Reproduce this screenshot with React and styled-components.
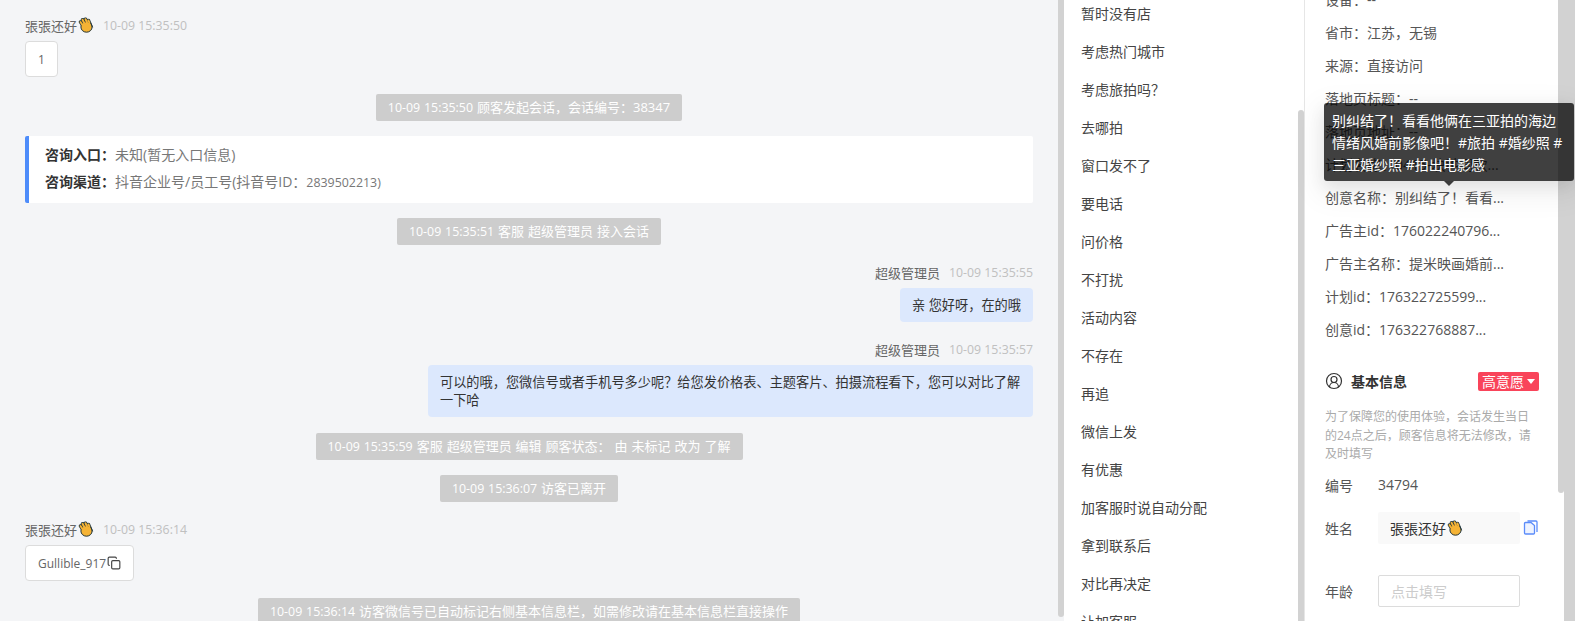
import React from "react";
import styled, { createGlobalStyle } from "styled-components";
import { CircleUserRound, Copy } from "lucide-react";

const GlobalStyle = createGlobalStyle`
  html, body {
    margin: 0;
    height: 100%;
    overflow: hidden;
    background: #d2d2d2;
    font-family: "Open Sans", "Noto Sans CJK SC", sans-serif;
  }
`;

const Page = styled.div`
  position: relative;
  display: flex;
  width: 1575px;
  height: 621px;
  overflow: hidden;
`;

const ChatPanel = styled.div`
  width: 1058px;
  height: 621px;
  flex: none;
  box-sizing: border-box;
  padding: 15px 25px 0;
  background: #f4f5f7;
  overflow: hidden;
  display: flex;
  flex-direction: column;

  > * {
    flex: none;
  }
`;

const ChatScroll = styled.div`
  width: 6px;
  flex: none;
  height: 621px;
  background: #f4f5f7;
`;

const ChatThumb = styled.div`
  height: 617px;
  background: #d2d2d2;
  border-radius: 0 0 3px 3px;
`;

const MetaRow = styled.div`
  display: flex;
  align-items: center;
  justify-content: ${(p) => (p.$right ? "flex-end" : "flex-start")};
  height: 20px;
  margin-top: ${(p) => p.$top || 0}px;
  font-size: 13px;
  color: #666;
`;

const Time = styled.span`
  margin-left: 9px;
  font-size: 12.3px;
  color: #c0c0c0;
`;

const Bubble = styled.div`
  align-self: flex-start;
  box-sizing: border-box;
  height: 36px;
  margin-top: 6px;
  padding: 0 12px;
  display: flex;
  align-items: center;
  background: #fff;
  border: 1px solid #dcdcdc;
  border-radius: 4px;
  font-size: 12px;
  color: #666;

  svg {
    margin-left: 1px;
  }
`;

const Notice = styled.div`
  align-self: center;
  margin-top: ${(p) => p.$top}px;
  padding: 0 12px;
  height: 27px;
  line-height: 27px;
  background: #cdcdcd;
  border-radius: 2px;
  font-size: 13px;
  word-spacing: 0.6px;
  color: #fff;
  white-space: nowrap;
`;

const Stamp = styled.span`
  font-size: 12.4px;
`;

const InfoCard = styled.div`
  margin-top: 15px;
  height: 67px;
  box-sizing: border-box;
  padding: 5px 16px;
  background: #fff;
  border-left: 4px solid #4d8cfa;
  border-radius: 2px;
  font-size: 14px;
  line-height: 27px;
  color: #777;
  white-space: nowrap;

  b {
    color: #333;
    font-weight: 700;
  }
`;

const AgentBubble = styled.div`
  align-self: flex-end;
  box-sizing: border-box;
  max-width: 605px;
  margin-top: 6px;
  padding: 8px 12px;
  background: #dce8fd;
  border-radius: 4px;
  font-size: 13.2px;
  line-height: 18px;
  color: #333;
`;

const QuickList = styled.div`
  width: 234px;
  flex: none;
  height: 621px;
  overflow: hidden;
  background: #fff;
  box-sizing: border-box;
  padding: 0 12px 0 17px;
`;

const QuickItem = styled.div`
  height: 38px;
  line-height: 38px;
  font-size: 14px;
  color: #444;
  &:first-child {
    margin-top: -5px;
  }
`;

const QuickScroll = styled.div`
  width: 6px;
  flex: none;
  height: 621px;
  display: flex;
  flex-direction: column;
  background: #fff;
`;

const QuickThumb = styled.div`
  margin-top: 110px;
  flex: 1;
  background: #d2d2d2;
  border-radius: 3px 3px 0 0;
`;

const Divider = styled.div`
  width: 1px;
  flex: none;
  background: #e6e6e6;
`;

const SidePanel = styled.div`
  width: 253px;
  flex: none;
  height: 621px;
  overflow: hidden;
  background: #fff;
  box-sizing: border-box;
  padding: 0 0 0 20px;
`;

const FactRow = styled.div`
  height: 33px;
  line-height: 33px;
  font-size: 14px;
  color: #555;
  white-space: nowrap;
  &:first-child {
    margin-top: -17px;
  }
`;

const SectionHead = styled.div`
  display: flex;
  align-items: center;
  margin-top: 25px;
  height: 20px;
  padding-right: 19px;
  color: #333;
  font-size: 14px;
  font-weight: 700;

  svg {
    margin-right: 8px;
  }
`;

const IntentTag = styled.span`
  margin-left: auto;
  display: flex;
  align-items: center;
  gap: 3px;
  height: 19px;
  padding: 0 4px;
  background: #f9445a;
  border-radius: 2px;
  color: #fff;
  font-size: 14px;
  font-weight: 400;
`;

const Caret = styled.i`
  width: 0;
  height: 0;
  border: 4px solid transparent;
  border-top: 5px solid #fff;
  border-bottom: 0;
`;

const Hint = styled.p`
  margin: 17px 26px 0 0;
  font-size: 12px;
  line-height: 18.5px;
  color: #aaa;
`;

const FormRow = styled.div`
  display: flex;
  align-items: center;
  margin-top: ${(p) => p.$top}px;
  font-size: 14px;
  color: #555;
`;

const FormLabel = styled.span`
  width: 53px;
  flex: none;
`;

const NameBox = styled.div`
  width: 142px;
  height: 32px;
  box-sizing: border-box;
  padding-left: 12px;
  display: flex;
  align-items: center;
  background: #f9f9f9;
  border-radius: 2px;
  font-size: 14px;
  color: #333;
`;

const Input = styled.div`
  width: 142px;
  height: 32px;
  box-sizing: border-box;
  padding-left: 12px;
  display: flex;
  align-items: center;
  border: 1px solid #dcdcdc;
  border-radius: 2px;
  font-size: 14px;
  color: #ccc;
`;

const RightScroll = styled.div`
  width: 6px;
  flex: none;
  height: 621px;
  background: #fff;
`;

const RightThumb = styled.div`
  height: 493px;
  background: #d2d2d2;
  border-radius: 0 0 3px 3px;
`;

const Tooltip = styled.div`
  position: absolute;
  left: 1324px;
  top: 103px;
  width: 250px;
  box-sizing: border-box;
  padding: 7px 8px 5px;
  background: rgba(0, 0, 0, 0.75);
  border-radius: 3px;
  box-shadow: 0 6px 16px rgba(0, 0, 0, 0.08), 0 9px 28px 8px rgba(0, 0, 0, 0.05);
  font-size: 14px;
  line-height: 22px;
  color: #fff;
  word-break: break-all;

  &::after {
    content: "";
    position: absolute;
    left: 120px;
    bottom: -5px;
    border: 5px solid transparent;
    border-top: 5px solid rgba(0, 0, 0, 0.75);
    border-bottom: 0;
  }
`;

// no colour emoji font in the sandbox, so the clapping hands are drawn
function Wave() {
  const fingers = "M4.5 8 L2.5 5 M6.5 6.5 L4.5 2.8 M9 5.5 L7.5 2.2 M11.5 6 L10.5 3.5";
  return (
    <svg width="16" height="16" viewBox="0 0 16 16" style={{ marginLeft: 1 }}>
      <path d="M3.5 3 L6 0.8 L9.5 1 L7 4Z" fill="#1f4f66" />
      <path d={fingers} stroke="#21363d" strokeWidth="3.4" strokeLinecap="round" fill="none" />
      <ellipse cx="8.5" cy="10" rx="5.6" ry="5.2" fill="#f5b335" stroke="#21363d" strokeWidth="1" />
      <path d={fingers} stroke="#f5b335" strokeWidth="2" strokeLinecap="round" fill="none" />
      <path d="M13 6 L14.5 10" stroke="#21363d" strokeWidth="1" strokeLinecap="round" />
    </svg>
  );
}

function DocsIcon() {
  return (
    <svg width="15" height="15" viewBox="0 0 15 15" style={{ marginLeft: 3 }}>
      <path d="M4.5 1 H13 a1 1 0 0 1 1 1 V12" fill="none" stroke="#5b8cfa" strokeWidth="1.3" />
      <path d="M1.5 3.5 a1 1 0 0 1 1 -1 H8 L11.5 5.5 V13 a1 1 0 0 1 -1 1 H2.5 a1 1 0 0 1 -1 -1Z" fill="#eef3ff" stroke="#5b8cfa" strokeWidth="1.3" />
    </svg>
  );
}

const quickItems = [
  "暂时没有店", "考虑热门城市", "考虑旅拍吗？", "去哪拍", "窗口发不了", "要电话", "问价格", "不打扰",
  "活动内容", "不存在", "再追", "微信上发", "有优惠", "加客服时说自动分配", "拿到联系后", "对比再决定", "让加客服",
];

const facts = [
  "设备：--", "省市：江苏，无锡", "来源：直接访问", "落地页标题：--", "落地页地址：--", "计划名称：0415-块种同款...",
  "创意名称：别纠结了！看看...", "广告主id：176022240796...", "广告主名称：提米映画婚前...", "计划id：176322725599...", "创意id：176322768887...",
];

export default function App() {
  return (
    <Page>
      <GlobalStyle />
      <ChatPanel>
        <MetaRow>張張还好<Wave /><Time>10-09 15:35:50</Time></MetaRow>
        <Bubble>1</Bubble>
        <Notice $top={17}><Stamp>10-09 15:35:50</Stamp> 顾客发起会话，会话编号：38347</Notice>
        <InfoCard>
          <div><b>咨询入口：</b>未知(暂无入口信息)</div>
          <div><b>咨询渠道：</b>抖音企业号/员工号(抖音号ID：<Stamp>2839502213)</Stamp></div>
        </InfoCard>
        <Notice $top={15}><Stamp>10-09 15:35:51</Stamp> 客服 超级管理员 接入会话</Notice>
        <MetaRow $right $top={17}>超级管理员<Time>10-09 15:35:55</Time></MetaRow>
        <AgentBubble>亲 您好呀，在的哦</AgentBubble>
        <MetaRow $right $top={17}>超级管理员<Time>10-09 15:35:57</Time></MetaRow>
        <AgentBubble>可以的哦，您微信号或者手机号多少呢？给您发价格表、主题客片、拍摄流程看下，您可以对比了解一下哈</AgentBubble>
        <Notice $top={16}><Stamp>10-09 15:35:59</Stamp> 客服 超级管理员 编辑 顾客状态： 由 未标记 改为 了解</Notice>
        <Notice $top={15}><Stamp>10-09 15:36:07</Stamp> 访客已离开</Notice>
        <MetaRow $top={17}>張張还好<Wave /><Time>10-09 15:36:14</Time></MetaRow>
        <Bubble>Gullible_917<Copy size={14} color="#444" /></Bubble>
        <Notice $top={17}><Stamp>10-09 15:36:14</Stamp> 访客微信号已自动标记右侧基本信息栏，如需修改请在基本信息栏直接操作</Notice>
      </ChatPanel>
      <ChatScroll><ChatThumb /></ChatScroll>
      <QuickList>
        {quickItems.map((t) => <QuickItem key={t}>{t}</QuickItem>)}
      </QuickList>
      <QuickScroll><QuickThumb /></QuickScroll>
      <Divider />
      <SidePanel>
        {facts.map((t) => <FactRow key={t}>{t}</FactRow>)}
        <SectionHead><CircleUserRound size={18} strokeWidth={1.6} />基本信息<IntentTag>高意愿<Caret /></IntentTag></SectionHead>
        <Hint>为了保障您的使用体验，会话发生当日的24点之后，顾客信息将无法修改，请及时填写</Hint>
        <FormRow $top={11}><FormLabel>编号</FormLabel>34794</FormRow>
        <FormRow $top={17}><FormLabel>姓名</FormLabel><NameBox>張張还好<Wave /></NameBox><DocsIcon /></FormRow>
        <FormRow $top={31}><FormLabel>年龄</FormLabel><Input>点击填写</Input></FormRow>
      </SidePanel>
      <RightScroll><RightThumb /></RightScroll>
      <Tooltip>别纠结了！看看他俩在三亚拍的海边情绪风婚前影像吧！#旅拍 #婚纱照 #三亚婚纱照 #拍出电影感</Tooltip>
    </Page>
  );
}
